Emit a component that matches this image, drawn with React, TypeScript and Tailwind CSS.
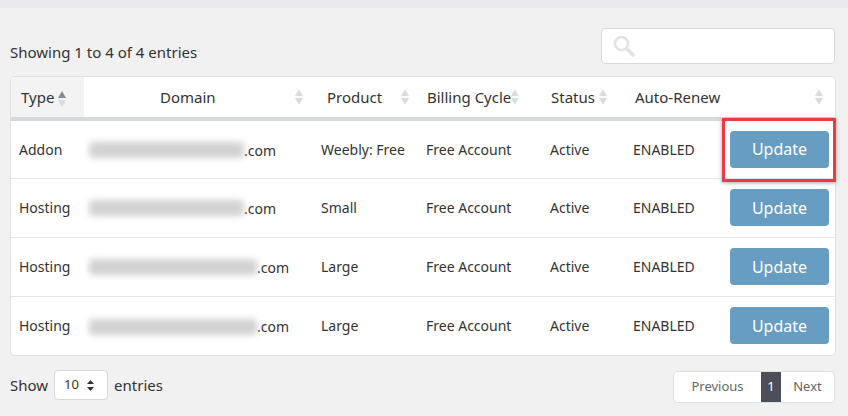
import React from "react";

const Sort = ({ up }: { up?: boolean }) => (
  <svg width="8" height="18" viewBox="0 0 8 18" className="inline-block">
    <path d="M4 1 L8 8 L0 8 Z" fill={up ? "#8a8a8a" : "#dcdcdc"} />
    <path d="M4 17 L8 10 L0 10 Z" fill="#dcdcdc" />
  </svg>
);

const Blur = ({ w }: { w: number }) => (
  <span className="inline-block align-middle h-[16px] bg-[#d2d2d2] blur-[3px] rounded" style={{ width: w }} />
);

const rows = [
  { t: "Addon", w: 155, p: "Weebly: Free" },
  { t: "Hosting", w: 155, p: "Small" },
  { t: "Hosting", w: 168, p: "Large" },
  { t: "Hosting", w: 168, p: "Large" },
];

export default function App() {
  return (
    <div className="w-[848px] h-[416px] bg-[#f1f1f1] text-[#333] text-[14px] font-['Open_Sans',sans-serif] relative overflow-hidden">
      <div className="h-[8px] bg-[#e8eaed]" />
      <div className="flex items-end justify-between pl-[10px] pr-[13px] mt-[20px] h-[36px]">
        <div className="text-[15px] mb-[1px]">Showing 1 to 4 of 4 entries</div>
        <div className="w-[234px] h-[36px] bg-white border border-[#d5d8dc] rounded flex items-center pl-[10px]">
          <svg width="24" height="24" viewBox="0 0 24 24" fill="none" stroke="#e2e2e2" strokeWidth="2.5">
            <circle cx="9.5" cy="9.5" r="6.5" />
            <path d="M14.5 14.5 L21 21" strokeWidth="3.5" strokeLinecap="round" />
          </svg>
        </div>
      </div>
      <div className="mx-[10px] mt-[12px] w-[826px] bg-white border border-[#dde0e3] rounded-sm">
        <table className="w-full border-collapse table-fixed">
          <colgroup>
            <col className="w-[73px]" />
            <col className="w-[227px]" />
            <col className="w-[106px]" />
            <col className="w-[124px]" />
            <col className="w-[82px]" />
            <col className="w-[98px]" />
            <col />
          </colgroup>
          <thead>
            <tr className="h-[42px] text-[15px] border-b-[4px] border-[#d5d9de]">
              <th className="bg-[#f3f3f3] font-normal text-left pl-[10px]">Type <Sort up /></th>
              <th className="font-normal">
                <div className="flex items-center pl-[76px] pr-[8px] justify-between"><span>Domain</span><Sort /></div>
              </th>
              <th className="font-normal">
                <div className="flex items-center pl-[16px] pr-[8px] justify-between"><span>Product</span><Sort /></div>
              </th>
              <th className="font-normal">
                <div className="flex items-center pl-[10px] pr-[22px] justify-between"><span className="whitespace-nowrap">Billing Cycle</span><Sort /></div>
              </th>
              <th className="font-normal">
                <div className="flex items-center pl-[10px] pr-[16px] justify-between"><span>Status</span><Sort /></div>
              </th>
              <th colSpan={2} className="font-normal">
                <div className="flex items-center pl-[12px] pr-[12px] justify-between"><span>Auto-Renew</span><Sort /></div>
              </th>
            </tr>
          </thead>
          <tbody>
            {rows.map((r, i) => (
              <tr key={i} className={"h-[59px] " + (i < 3 ? "border-b border-[#e3e5e8]" : "")}>
                <td className="pl-[8px]">{r.t}</td>
                <td className="pl-[5px] whitespace-nowrap"><Blur w={r.w} /><span className="align-middle">.com</span></td>
                <td className="pl-[10px] whitespace-nowrap">{r.p}</td>
                <td className="pl-[9px] whitespace-nowrap">Free Account</td>
                <td className="pl-[9px]">Active</td>
                <td className="pl-[10px]">ENABLED</td>
                <td>
                  <div className="flex justify-end pr-[6px]">
                    <div className="relative">
                      <button className="w-[99px] h-[37px] bg-[#689dc2] text-white text-[16px] rounded-[4px] font-['Liberation_Sans',sans-serif]">Update</button>
                      {i === 0 && (
                        <div className="absolute left-[-8px] top-[-13px] w-[114px] h-[64px] border-[3px] border-[#ec3b3f] shadow-[0_1px_4px_rgba(0,0,0,0.35)]" />
                      )}
                    </div>
                  </div>
                </td>
              </tr>
            ))}
          </tbody>
        </table>
      </div>
      <div className="flex items-center justify-between pl-[10px] pr-[13px] mt-[11px]">
        <div className="flex items-center gap-[6px] text-[15px]">
          <span>Show</span>
          <div className="w-[54px] h-[30px] bg-white border border-[#d5d8dc] rounded flex items-center gap-[8px] pl-[9px] text-[13px]">
            10
            <svg width="7" height="11" viewBox="0 0 7 11"><path d="M3.5 0 L7 4 L0 4 Z M3.5 11 L7 7 L0 7 Z" fill="#333" /></svg>
          </div>
          <span>entries</span>
        </div>
        <div className="flex h-[32px] border border-[#dde0e3] rounded bg-white text-[13px] text-[#666] mt-[4px]">
          <span className="w-[87px] flex items-center justify-center">Previous</span>
          <span className="w-[20px] bg-[#4b4f5a] text-white flex items-center justify-center">1</span>
          <span className="w-[53px] flex items-center justify-center">Next</span>
        </div>
      </div>
    </div>
  );
}
